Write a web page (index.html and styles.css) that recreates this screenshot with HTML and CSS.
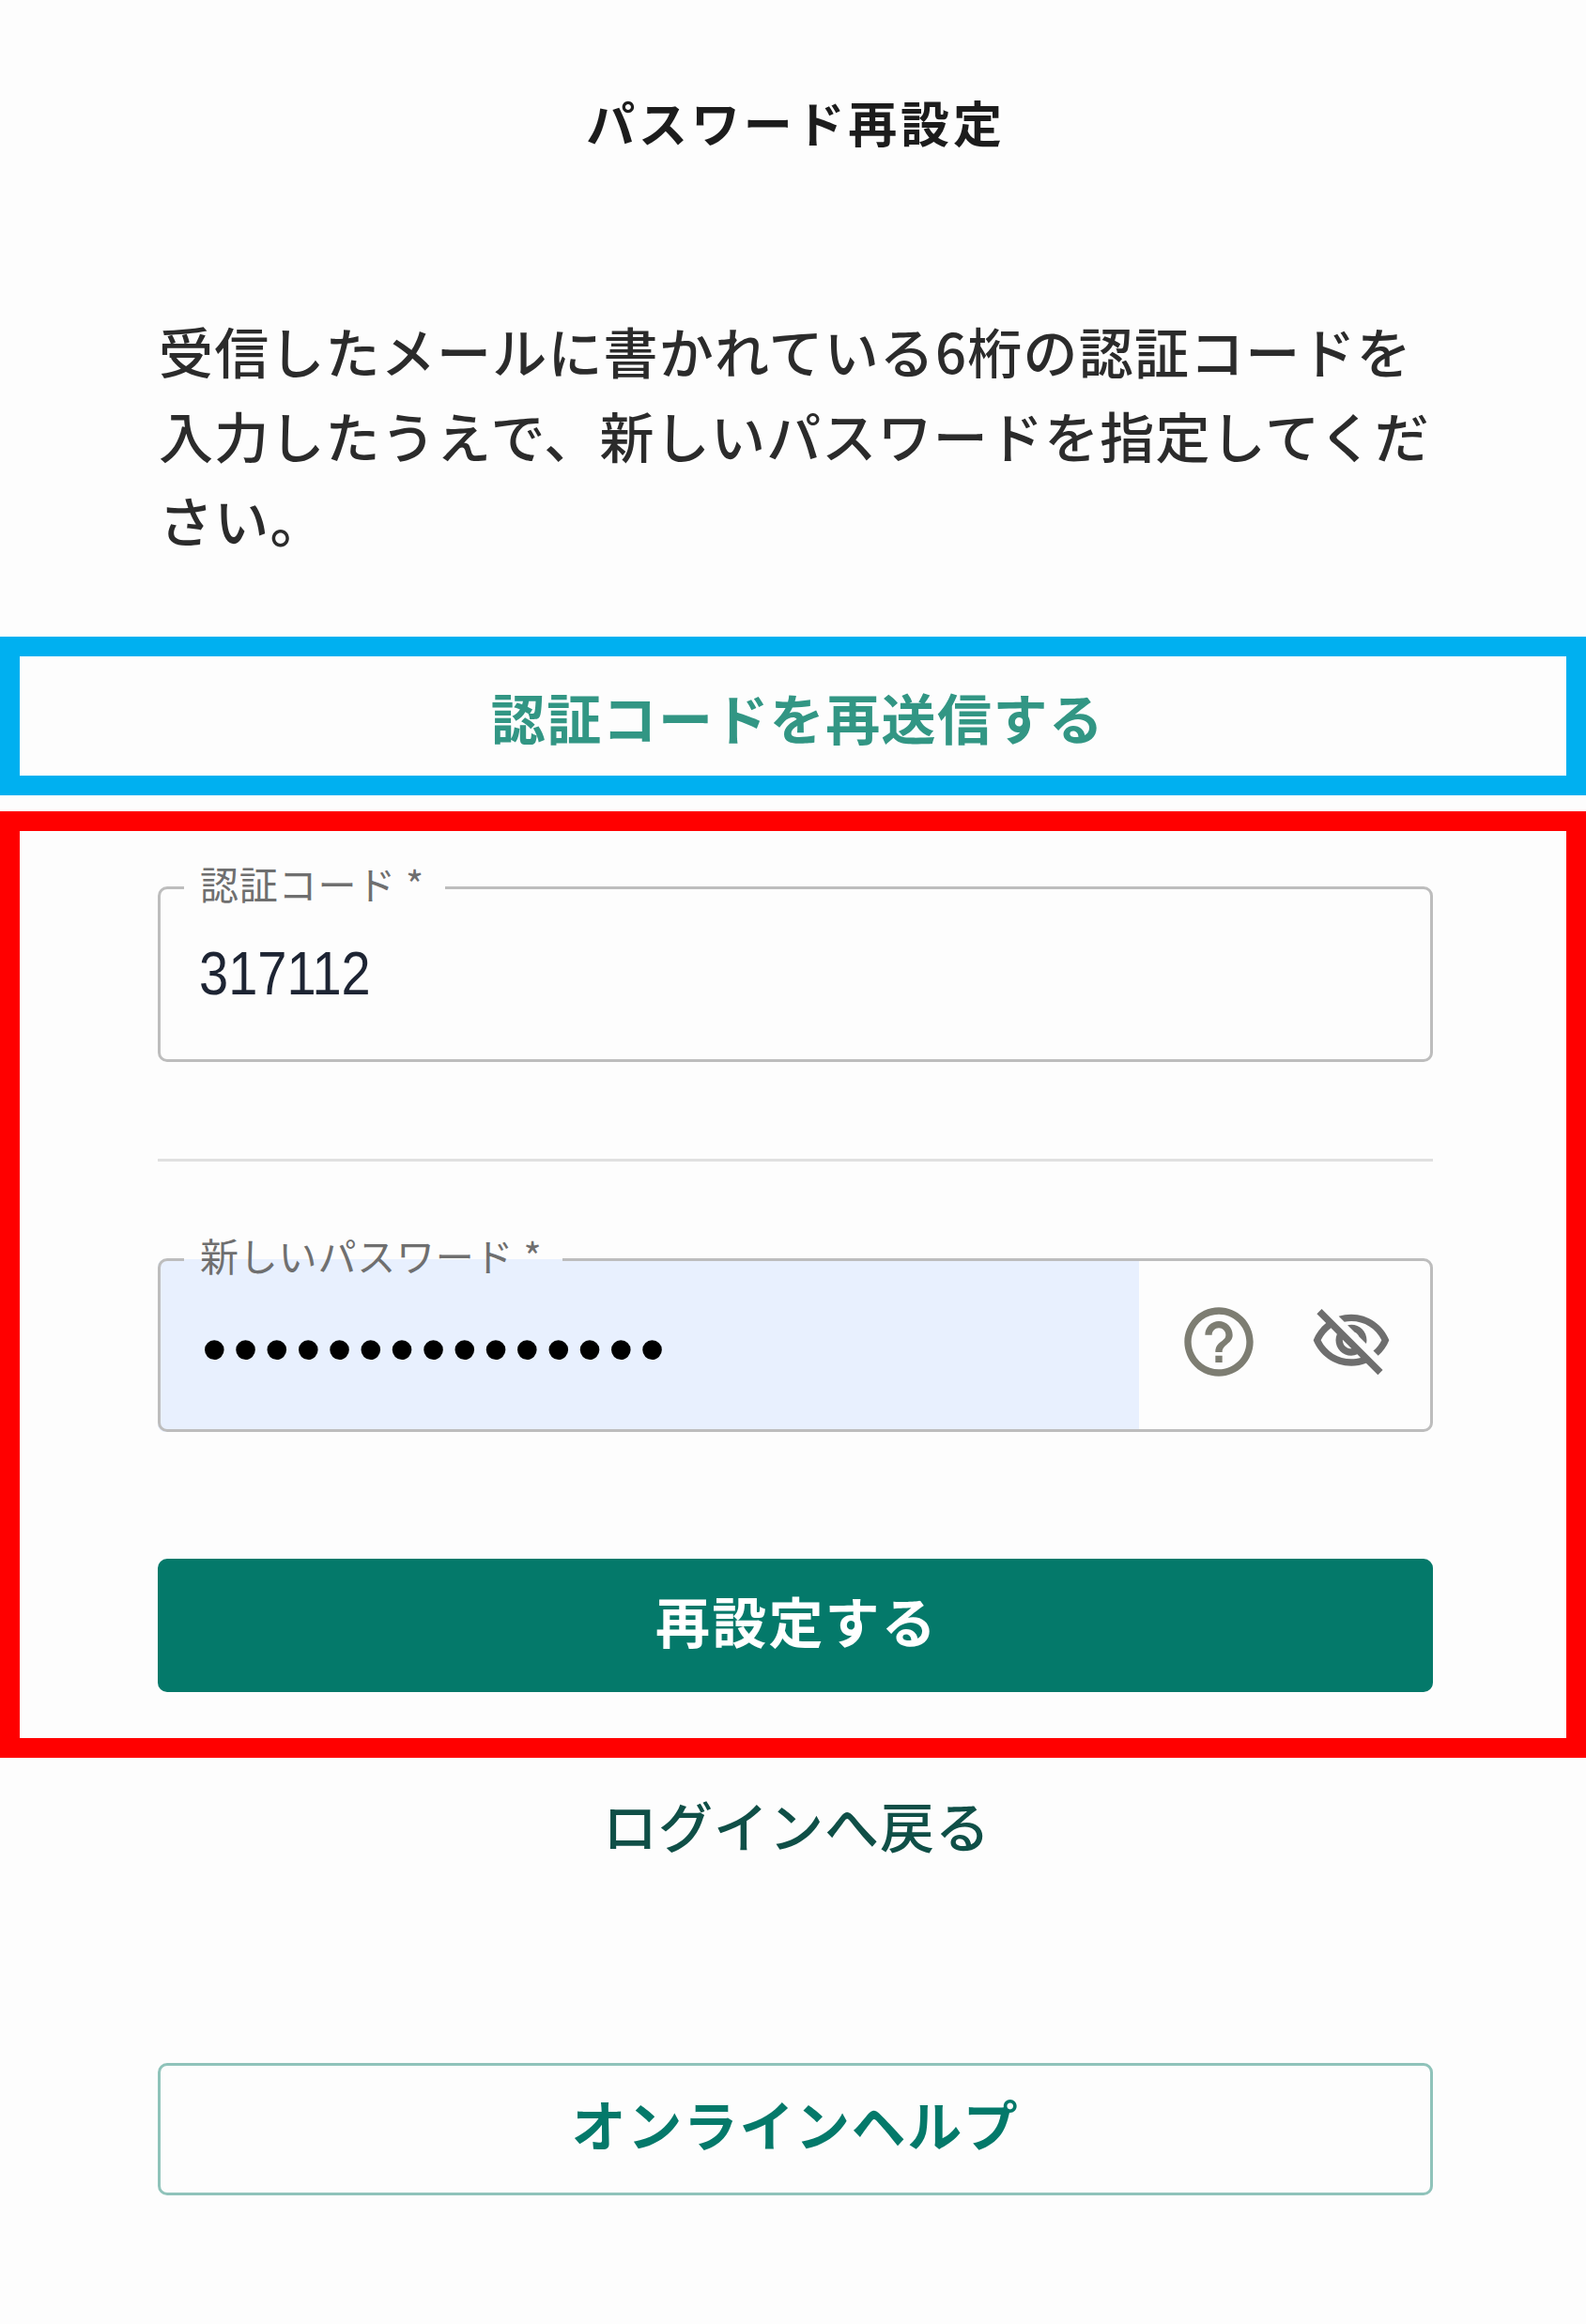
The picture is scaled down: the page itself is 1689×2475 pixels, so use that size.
FILE: index.html
```html
<!DOCTYPE html>
<html lang="ja">
<head>
    <meta charset="UTF-8">
    <meta name="viewport" content="width=device-width, initial-scale=1.0">
    <title>パスワード再設定</title>
    <link rel="stylesheet" href="styles.css">
</head>
<body>

<header class="page-title">
    <h1>パスワード再設定</h1>
</header>

<p class="lead">受信したメールに書かれている6桁の認証コードを入力したうえで、新しいパスワードを指定してください。</p>

<div class="frame frame-blue">
    <a href="#" class="resend">認証コードを再送信する</a>
</div>

<form class="frame frame-red" onsubmit="return false">
    <div class="field">
        <input type="text" class="field-input code-input" value="317112">
        <fieldset class="outline"><legend>認証コード *</legend></fieldset>
    </div>

    <hr class="divider">

    <div class="field field-password">
        <input type="password" class="field-input autofilled" value="passwordpasswor">
        <div class="field-icons">
            <svg viewBox="0 0 24 24" class="icon"><path d="M11 18h2v-2h-2v2zm1-16C6.48 2 2 6.48 2 12s4.48 10 10 10 10-4.48 10-10S17.52 2 12 2zm0 18c-4.41 0-8-3.59-8-8s3.59-8 8-8 8 3.59 8 8-3.59 8-8 8zm0-14c-2.21 0-4 1.79-4 4h2c0-1.1.9-2 2-2s2 .9 2 2c0 2-3 1.75-3 5h2c0-2.25 3-2.5 3-5 0-2.21-1.79-4-4-4z"/></svg>
            <svg viewBox="0 0 24 24" class="icon icon-eye"><path d="M12 6c3.79 0 7.17 2.13 8.82 5.5-.59 1.22-1.42 2.27-2.41 3.12l1.41 1.41c1.39-1.23 2.49-2.77 3.18-4.53C21.27 7.11 17 4 12 4c-1.27 0-2.49.2-3.64.57l1.65 1.65C10.66 6.09 11.32 6 12 6zm-1.07 1.14L13 9.21c.57.25 1.03.71 1.28 1.28l2.07 2.07c.08-.34.14-.7.14-1.07C16.5 9.01 14.48 7 12 7c-.37 0-.72.05-1.07.14zM2.01 3.87l2.68 2.68C3.06 7.83 1.77 9.53 1 11.5 2.73 15.89 7 19 12 19c1.52 0 2.98-.29 4.32-.82l3.42 3.42 1.41-1.41L3.42 2.45 2.01 3.87zm7.5 7.5 2.61 2.61c-.04.01-.08.02-.12.02-1.38 0-2.5-1.12-2.5-2.5 0-.05.01-.08.01-.13zm-3.4-3.4 1.75 1.75c-.23.55-.36 1.15-.36 1.78 0 2.48 2.02 4.5 4.5 4.5.63 0 1.23-.13 1.77-.36l.98.98c-.88.24-1.8.38-2.75.38-3.79 0-7.17-2.13-8.82-5.5.7-1.43 1.72-2.61 2.93-3.53z"/></svg>
        </div>
        <fieldset class="outline"><legend>新しいパスワード *</legend></fieldset>
    </div>

    <button type="submit" class="btn-primary">再設定する</button>
</form>

<div class="back-link">
    <a href="#">ログインへ戻る</a>
</div>

<div class="help">
    <a href="#" class="btn-help">オンラインヘルプ</a>
</div>

</body>
</html>
```

FILE: styles.css
```css
* {
    box-sizing: border-box;
}

body {
    font-family: "Noto Sans CJK JP", "Noto Sans", sans-serif;
    margin: 0;
    padding: 0;
    height: 2475px;
    background-color: #fdfdfd;
    color: #222;
}

a {
    text-decoration: none;
}

.page-title {
    height: 268px;
    padding: 93px 0 0 6px;
    text-align: center;
}

.page-title h1 {
    margin: 0;
    font-size: 52px;
    line-height: 74px;
    font-weight: 700;
    letter-spacing: 3.8px;
    color: #1c1c1c;
}

.lead {
    margin: 60px 165px 0 169px;
    height: 350px;
    font-size: 58px;
    line-height: 90px;
    font-weight: 500;
    letter-spacing: 1.2px;
    color: #2b2b2b;
}

.frame {
    border-style: solid;
    border-width: 21px;
    background-color: #fdfdfd;
}

.frame-blue {
    height: 169px;
    padding-left: 10px;
    border-color: #00b0f0;
    display: flex;
    align-items: center;
    justify-content: center;
}

.resend {
    font-size: 58px;
    font-weight: 700;
    letter-spacing: 1.4px;
    color: #329684;
}

.frame-red {
    margin-top: 17px;
    height: 1008px;
    border-color: #ff0000;
    padding: 60px 142px 0 147px;
}

.field {
    position: relative;
    height: 186px;
    display: flex;
}

.field-password {
    height: 184px;
}

.field-input {
    width: 100%;
    border: none;
    outline: none;
    background: transparent;
    padding: 0 44px;
    font-family: "Liberation Sans", sans-serif;
    font-size: 56px;
    color: #1d2433;
    border-radius: 8px;
}

.code-input {
    transform: translateY(-2px) scaleY(1.15);
}

.autofilled {
    flex: none;
    width: 1045px;
    padding: 6px 0 0 47px;
    background-color: #e8f0fe;
    color: #000;
    font-size: 76px;
    letter-spacing: 6.7px;
    border-radius: 8px 0 0 8px;
}

.field-icons {
    flex: 1;
    display: flex;
    align-items: center;
    justify-content: flex-end;
    gap: 53px;
    padding: 0 43px 8px 0;
}

.icon {
    width: 88px;
    height: 88px;
    fill: #7d7d72;
}

.icon-eye {
    fill: #6e6e6e;
}

.outline {
    position: absolute;
    top: -26px;
    left: 0;
    right: 0;
    bottom: 0;
    margin: 0;
    padding: 0 25px;
    border: 3px solid #bdbdbd;
    border-radius: 10px;
    pointer-events: none;
    min-width: 0;
}

.outline legend {
    padding: 0 22px 10px 17px;
    font-size: 41px;
    line-height: 42px;
    letter-spacing: 0.8px;
    color: #6f6f6f;
}

.divider {
    margin: 103px 0 104px;
    border: none;
    border-top: 3px solid #e0e0e0;
}

.btn-primary {
    display: block;
    width: 100%;
    height: 142px;
    margin-top: 135px;
    padding: 0 0 12px 3px;
    border: none;
    border-radius: 10px;
    background-color: #04796a;
    color: #fff;
    font-family: inherit;
    font-size: 58px;
    font-weight: 700;
    letter-spacing: 2.2px;
    cursor: pointer;
}

.back-link {
    height: 325px;
    padding: 29px 0 0 8px;
    text-align: center;
}

.back-link a {
    font-size: 58px;
    line-height: 84px;
    font-weight: 500;
    letter-spacing: 1px;
    color: #0f4f47;
}

.help {
    padding: 0 163px 0 168px;
}

.btn-help {
    display: block;
    height: 141px;
    line-height: 122px;
    text-align: center;
    border: 3px solid #8fc3ba;
    border-radius: 10px;
    font-size: 58px;
    font-weight: 700;
    letter-spacing: 1.6px;
    color: #04796a;
}
```
